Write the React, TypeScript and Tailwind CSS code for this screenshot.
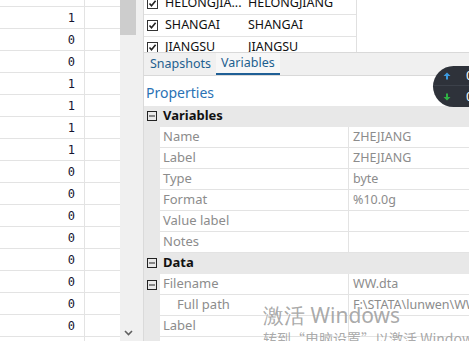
import React from "react";

const values = ["0", "1", "0", "0", "1", "1", "1", "1", "0", "0", "0", "0", "0", "0", "0", "0", "0"];

function Box({ minus = true }: { minus?: boolean }) {
  return (
    <svg width="10" height="10" viewBox="0 0 10 10" className="shrink-0">
      <rect x="0.5" y="0.5" width="9" height="9" fill="none" stroke="#222" strokeWidth="1" />
      {minus && <line x1="2" y1="5" x2="8" y2="5" stroke="#222" strokeWidth="1" />}
    </svg>
  );
}

function Check() {
  return (
    <svg width="11" height="11" viewBox="0 0 11 11" className="shrink-0">
      <rect x="0.5" y="0.5" width="10" height="10" fill="#fff" stroke="#333" strokeWidth="1" />
      <path d="M2.5 5.5 L4.5 7.8 L8.6 2.8" fill="none" stroke="#222" strokeWidth="1.6" />
    </svg>
  );
}

const listRows = [
  ["HELONGJIA...", "HELONGJIANG"],
  ["SHANGAI", "SHANGAI"],
  ["JIANGSU", "JIANGSU"],
];

type Row = { kind: "header"; label: string } | { kind: "prop"; name: string; value: string; indent?: boolean; expander?: boolean };

const props: Row[] = [
  { kind: "header", label: "Variables" },
  { kind: "prop", name: "Name", value: "ZHEJIANG" },
  { kind: "prop", name: "Label", value: "ZHEJIANG" },
  { kind: "prop", name: "Type", value: "byte" },
  { kind: "prop", name: "Format", value: "%10.0g" },
  { kind: "prop", name: "Value label", value: "" },
  { kind: "prop", name: "Notes", value: "" },
  { kind: "header", label: "Data" },
  { kind: "prop", name: "Filename", value: "WW.dta", expander: true },
  { kind: "prop", name: "Full path", value: "F:\\STATA\\lunwen\\WW.dta", indent: true },
  { kind: "prop", name: "Label", value: "" },
  { kind: "prop", name: "", value: "" },
];

export default function App() {
  return (
    <div
      className="relative w-[469px] h-[341px] overflow-hidden bg-white flex"
      style={{ fontFamily: '"Noto Sans", "Open Sans", sans-serif' }}
    >
      {/* data grid */}
      <div className="w-[120px] shrink-0 h-full overflow-hidden">
        <div className="-mt-[15px] flex flex-col">
          {values.map((v, i) => (
            <div key={i} className="h-[22px] shrink-0 flex border-b border-[#e3e3e3]">
              <div
                className="w-[85px] h-full border-r border-[#e3e3e3] flex items-center justify-end pr-[9px] text-[12px] text-[#151530]"
                style={{ fontFamily: '"DejaVu Sans Mono", monospace' }}
              >
                {i === 0 ? "" : v}
              </div>
              <div className="flex-1" />
            </div>
          ))}
        </div>
      </div>

      {/* scrollbar */}
      <div className="w-[16px] shrink-0 h-full bg-[#f0f0f0] flex flex-col justify-between">
        <div className="h-[35px] bg-[#cdcdcd]" />
        <div className="h-[16px] flex items-center justify-center">
          <svg width="9" height="6" viewBox="0 0 9 6">
            <path d="M1 1 L4.5 4.5 L8 1" fill="none" stroke="#606060" strokeWidth="1.6" />
          </svg>
        </div>
      </div>

      {/* splitter */}
      <div className="w-[8px] shrink-0 h-full bg-[#f0f0f0] border-r border-[#dadada]" />

      {/* right panel */}
      <div className="flex-1 min-w-0 h-full flex flex-col overflow-hidden">
        {/* top list */}
        <div className="h-[52px] shrink-0 overflow-hidden">
          <div className="w-[213px] border-r border-[#e0e0e0] -mt-[7px]">
            {listRows.map((r, i) => (
              <div key={i} className="h-[22px] flex items-center border-b border-[#e3e3e3] text-[12.5px] text-[#111]">
                <div className="w-[21px] pl-[3px] flex items-center">
                  <Check />
                </div>
                <div className="w-[83px] whitespace-nowrap">{r[0]}</div>
                <div className="whitespace-nowrap">{r[1]}</div>
              </div>
            ))}
          </div>
        </div>

        {/* tabs */}
        <div className="h-[24px] shrink-0 bg-[#f0f0f0] border-t border-b border-[#d9d9d9] flex items-stretch text-[12.5px] text-[#1e5f8f]">
          <div className="pl-[6px] pr-[5px] flex items-center">Snapshots</div>
          <div className="px-[5px] flex items-center bg-[#f7f7f7] border-b-[2px] border-[#1f5f95]">Variables</div>
        </div>

        {/* properties */}
        <div className="h-[30px] shrink-0 flex items-center pl-[2px] pt-[2px] text-[14px] text-[#2a72b5]">Properties</div>
        <div className="flex flex-col shrink-0">
          {props.map((p, i) =>
            p.kind === "header" ? (
              <div key={i} className="h-[21px] shrink-0 flex items-center bg-[#e8e8e8] border-b border-[#e8e8e8]">
                <div className="w-[16px] flex items-center justify-center">
                  <Box />
                </div>
                <div className="pl-[3px] text-[13px] font-bold text-[#111]">{p.label}</div>
              </div>
            ) : (
              <div key={i} className="h-[21px] shrink-0 flex">
                <div className="w-[16px] shrink-0 bg-[#e8e8e8] flex items-center justify-center">
                  {p.expander && <Box />}
                </div>
                <div
                  className={`w-[189px] shrink-0 border-b border-r border-[#e3e3e3] flex items-center text-[13px] text-[#8c8c8c] whitespace-nowrap ${
                    p.indent ? "pl-[17px]" : "pl-[3px]"
                  }`}
                >
                  {p.name}
                </div>
                <div className="flex-1 min-w-0 border-b border-[#e3e3e3] flex items-center pl-[4px] text-[12.5px] text-[#8c8c8c] whitespace-nowrap overflow-hidden">
                  {p.value}
                </div>
              </div>
            )
          )}
        </div>
      </div>

      {/* floating pill */}
      <div className="absolute left-[433px] top-[66px] w-[60px] h-[41px] rounded-l-[21px] bg-[#2e323a] flex flex-col">
        <div className="h-[20px] flex items-center border-b border-[#3c414a]">
          <svg width="8" height="8" viewBox="0 0 8 8" className="ml-[10px]">
            <path d="M4 0.5 L7.5 4 H5 V7.5 H3 V4 H0.5 Z" fill="#3d9be0" />
          </svg>
          <span className="ml-[15px] text-[13px] text-white leading-none">0</span>
        </div>
        <div className="h-[21px] flex items-center">
          <svg width="8" height="8" viewBox="0 0 8 8" className="ml-[10px]">
            <path d="M4 7.5 L7.5 4 H5 V0.5 H3 V4 H0.5 Z" fill="#2fb344" />
          </svg>
          <span className="ml-[15px] text-[13px] text-white leading-none">0</span>
        </div>
      </div>

      {/* watermark */}
      <div className="absolute left-[263px] top-[305px] text-[21px] leading-none text-[#a0a0a0]/90 whitespace-nowrap pointer-events-none">
        激活 Windows
      </div>
      <div
        className="absolute left-[263px] top-[331px] text-[14px] leading-none text-[#a0a0a0]/90 whitespace-nowrap pointer-events-none"
        style={{ fontFamily: '"Noto Sans CJK SC", sans-serif' }}
      >
        转到“电脑设置”以激活 Windows。
      </div>
    </div>
  );
}
